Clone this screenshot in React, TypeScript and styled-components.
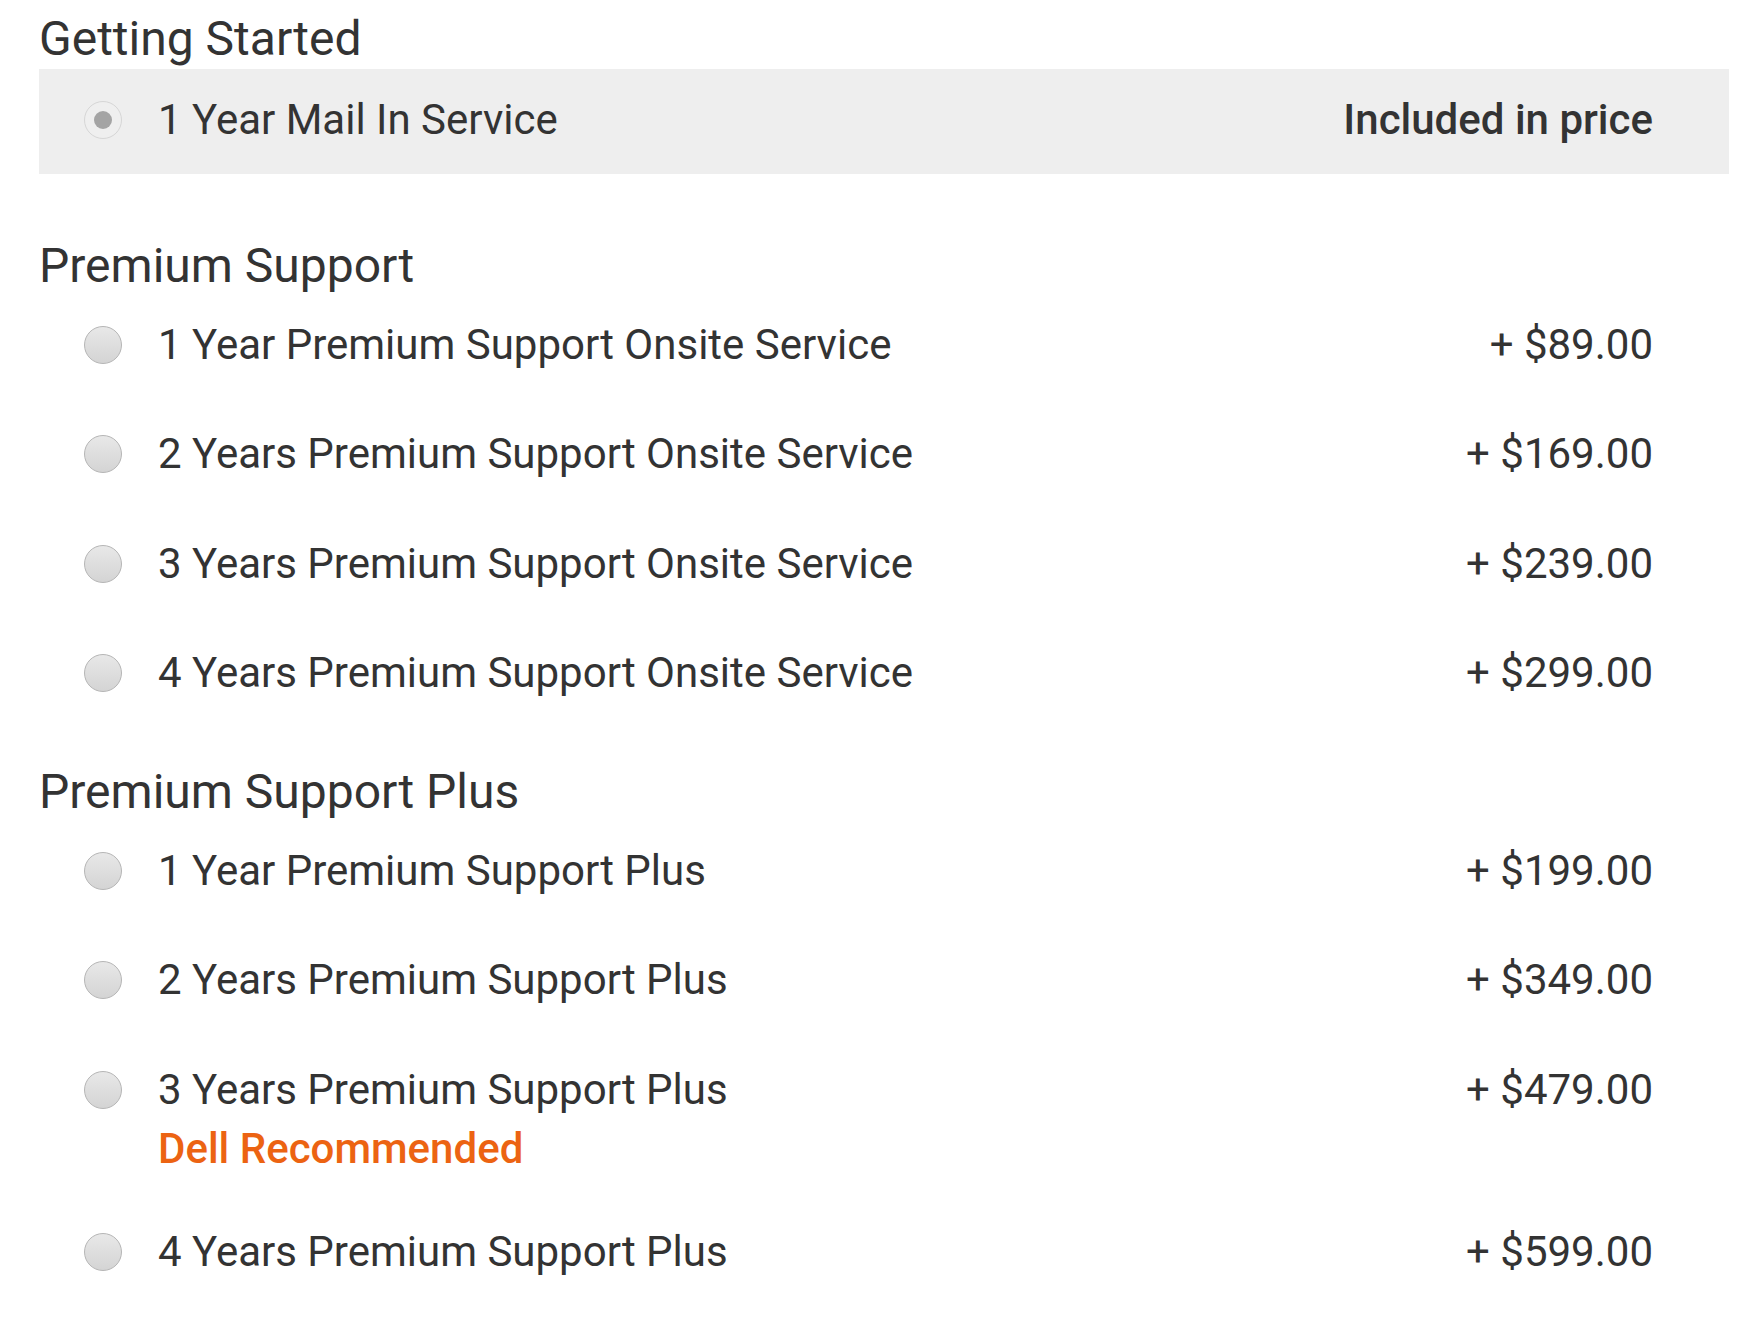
import React from "react";
import styled, { createGlobalStyle } from "styled-components";

//global
const GlobalStyle = createGlobalStyle`
  html, body {
    margin: 0;
    padding: 0;
    background: #fff;
  }
  body {
    font-family: Roboto, "Liberation Sans", Arial, sans-serif;
    color: #333;
  }
`;

//styles
const Page = styled.div`
  width: 1690px;
  padding: 15px 0 0 39px;
`;

const Section = styled.section<{ $gap: number }>`
  margin-bottom: ${p => p.$gap}px;
`;

const SectionTitle = styled.h2<{ $gap?: number }>`
  margin: 0 0 ${p => p.$gap || 0}px;
  font-size: 48px;
  line-height: 48px;
  font-weight: 400;
  color: #333;
`;

const OptionRow = styled.label<{ $highlight?: boolean }>`
  display: flex;
  align-items: flex-start;
  padding: ${p => (p.$highlight ? "19px 76px 22px 45px" : "22.75px 76px 22.75px 45px")};
  background: ${p => (p.$highlight ? "#eeeeee" : "transparent")};
  cursor: pointer;
`;

const Radio = styled.span<{ $checked?: boolean }>`
  flex: none;
  position: relative;
  width: 38px;
  height: 38px;
  margin-top: 13px;
  margin-right: 36px;
  border-radius: 50%;
  box-sizing: border-box;
  border: 1px solid ${p => (p.$checked ? "#d6d6d6" : "#b5b5b5")};
  background: ${p =>
    p.$checked
      ? "#efefef"
      : "linear-gradient(to bottom, #e8e8e8 0%, #dddddd 55%, #d4d4d4 100%)"};

  &::after {
    content: "";
    display: ${p => (p.$checked ? "block" : "none")};
    position: absolute;
    left: 50%;
    top: 50%;
    width: 18px;
    height: 18px;
    margin: -9px 0 0 -9px;
    border-radius: 50%;
    background: #a4a4a4;
  }
`;

const OptionBody = styled.div`
  flex: 1;
  display: flex;
  flex-direction: column;
`;

const OptionName = styled.span`
  font-size: 42px;
  line-height: 64px;
  color: #333;
`;

const Recommended = styled.span`
  font-size: 42px;
  line-height: 53px;
  font-weight: 500;
  color: #ec6312;
`;

const Price = styled.span<{ $strong?: boolean }>`
  flex: none;
  font-size: 42px;
  line-height: 64px;
  font-weight: ${p => (p.$strong ? 500 : 400)};
  color: #333;
`;

interface IOption {
  name: string;
  price: string;
  recommended?: boolean;
}

const premiumSupport: IOption[] = [
  { name: "1 Year Premium Support Onsite Service", price: "+ $89.00" },
  { name: "2 Years Premium Support Onsite Service", price: "+ $169.00" },
  { name: "3 Years Premium Support Onsite Service", price: "+ $239.00" },
  { name: "4 Years Premium Support Onsite Service", price: "+ $299.00" },
];

const premiumSupportPlus: IOption[] = [
  { name: "1 Year Premium Support Plus", price: "+ $199.00" },
  { name: "2 Years Premium Support Plus", price: "+ $349.00" },
  { name: "3 Years Premium Support Plus", price: "+ $479.00", recommended: true },
  { name: "4 Years Premium Support Plus", price: "+ $599.00" },
];

const Option: React.FC<{ option: IOption }> = ({ option }) => (
  <OptionRow>
    <Radio />
    <OptionBody>
      <OptionName>{option.name}</OptionName>
      {option.recommended && <Recommended>Dell Recommended</Recommended>}
    </OptionBody>
    <Price>{option.price}</Price>
  </OptionRow>
);

const App: React.FC = () => {
  return (
    <Page>
      <GlobalStyle />
      <Section $gap={68}>
        <SectionTitle $gap={6}>Getting Started</SectionTitle>
        <OptionRow $highlight>
          <Radio $checked />
          <OptionBody>
            <OptionName>1 Year Mail In Service</OptionName>
          </OptionBody>
          <Price $strong>Included in price</Price>
        </OptionRow>
      </Section>

      <Section $gap={40}>
        <SectionTitle>Premium Support</SectionTitle>
        {premiumSupport.map(o => (
          <Option key={o.name} option={o} />
        ))}
      </Section>

      <Section $gap={0}>
        <SectionTitle>Premium Support Plus</SectionTitle>
        {premiumSupportPlus.map(o => (
          <Option key={o.name} option={o} />
        ))}
      </Section>
    </Page>
  );
};

export default App;
